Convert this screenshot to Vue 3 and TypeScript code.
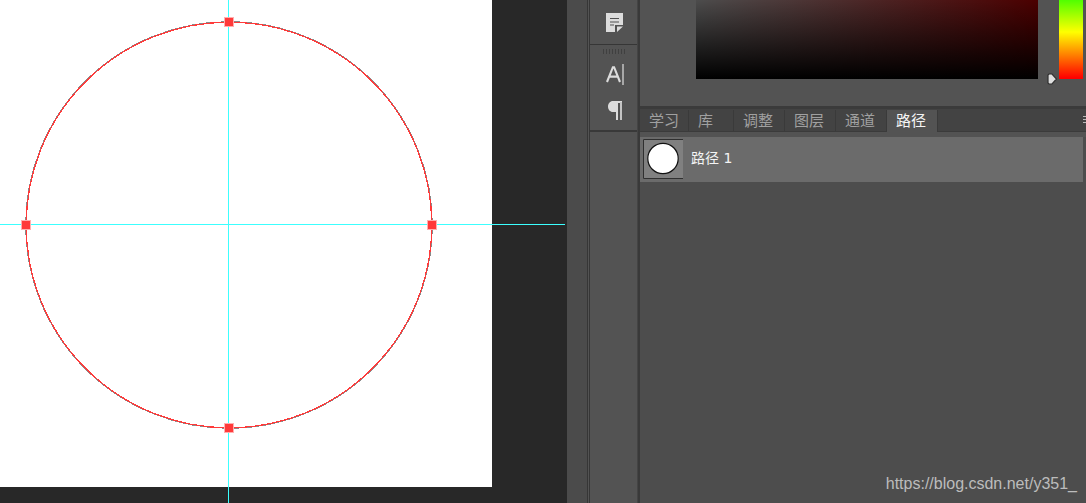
<script setup lang="ts">
import { ref } from 'vue'

interface Tab {
  id: string
  label: string
  size: string
}

const tabs: Tab[] = [
  { id: 'learn', label: '学习', size: 'medium' },
  { id: 'library', label: '库', size: 'short' },
  { id: 'adjust', label: '调整', size: 'normal' },
  { id: 'layers', label: '图层', size: 'normal' },
  { id: 'channels', label: '通道', size: 'normal' },
  { id: 'paths', label: '路径', size: 'normal' },
]

const active = ref('paths')

const anchors = [
  { x: 229, y: 22 },
  { x: 432, y: 225 },
  { x: 229, y: 428 },
  { x: 26, y: 225 },
]
</script>

<template>
  <div class="workspace">
    <main class="stage">
      <svg class="drawing" width="100%" height="100%" aria-label="画布">
        <rect width="492" height="487" fill="#fff" />
        <g shape-rendering="crispEdges" fill="#3cffff">
          <rect x="0" y="224" width="565" height="1" />
          <rect x="228" y="0" width="1" height="100%" />
        </g>
        <g fill="none" shape-rendering="crispEdges">
          <circle cx="229" cy="225" r="203.3" stroke="#8a8a8a" stroke-width="1.1" />
          <circle cx="229" cy="225" r="202.8" stroke="#ff3a3a" stroke-width="1.2" />
        </g>
        <g v-for="a in anchors" :key="`${a.x}-${a.y}`">
          <rect :x="a.x - 5" :y="a.y - 5" width="10" height="10" fill="#ffb0b0" />
          <rect :x="a.x - 4" :y="a.y - 4" width="8" height="8" fill="#ff3a3a" />
        </g>
      </svg>
    </main>
    <div class="gutter"></div>
    <aside class="dock">
      <div class="group notes">
        <button class="tool" aria-label="注释">
          <svg width="18" height="20" viewBox="0 0 18 20">
            <path d="M0 0H17V12H9V19H0Z" fill="#dcdcdc" />
            <path d="M11 13.5H17L11 19Z" fill="#dcdcdc" />
            <path d="M4 5.5H13M4 9H13M4 12H8" stroke="#505050" stroke-width="1.2" />
          </svg>
        </button>
      </div>
      <div class="group type">
        <div class="grip"></div>
        <button class="tool" aria-label="字符">
          <svg width="18" height="22" viewBox="0 0 18 22">
            <path d="M1 18L6.9 3.2H8.1L14 18M3.4 12.6H11.6" fill="none" stroke="#dcdcdc" stroke-width="2.1" />
            <path d="M17 0V21" stroke="#bdbdbd" stroke-width="1.6" />
          </svg>
        </button>
        <button class="tool" aria-label="段落">
          <svg width="14" height="20" viewBox="0 0 14 20">
            <path d="M5 0H14V2H10V19H8V11H5C2 11 0 8.5 0 5.5S2 0 5 0Z" fill="#dcdcdc" />
            <rect x="12" y="1" width="2" height="18" fill="#c4c4c4" />
          </svg>
        </button>
      </div>
    </aside>
    <section class="panels">
      <div class="color">
        <div class="field"></div>
        <div class="hue"><svg class="marker" width="11" height="12" viewBox="0 0 11 12">
          <path d="M2 1H5L9.5 6L5 11H2L1 10V2Z" fill="#dfdfdf" stroke="#303030" stroke-width="1.2" />
        </svg></div>
      </div>
      <nav class="tabs">
        <button
          v-for="t in tabs"
          :key="t.id"
          :class="['tab', t.size, { active: active === t.id }]"
          @click="active = t.id"
        >{{ t.label }}</button>
        <button class="menu" aria-label="面板菜单"></button>
      </nav>
      <div class="paths">
        <button class="row">
          <svg class="thumb" width="40" height="40" viewBox="0 0 40 40">
            <rect width="40" height="40" fill="#808080" />
            <path d="M40 .5H.5V39.5H40" fill="none" stroke="#303030" />
            <circle cx="20" cy="19.5" r="15.2" fill="#fff" stroke="#111" stroke-width="1.2" />
          </svg>
          <span>路径 1</span>
        </button>
      </div>
      <a class="source" href="https://blog.csdn.net/y351_">https://blog.csdn.net/y351_</a>
    </section>
  </div>
</template>

<style>
body {
  background: #282828;
}
</style>

<style scoped>
.workspace {
  display: flex;
  height: 100vh;
  overflow: hidden;
  background: #282828;
  font-family: "Liberation Sans", "Noto Sans CJK SC", sans-serif;
}
button {
  appearance: none;
  margin: 0;
  padding: 0;
  border: 0;
  border-radius: 0;
  background: none;
  font-family: inherit;
}
.stage {
  flex: 1;
  min-width: 0;
}
.drawing {
  display: block;
}
.gutter {
  width: 20px;
  background: #4b4b4b;
}
.dock {
  box-sizing: border-box;
  width: 51px;
  border-left: 3px double #363636;
  border-right: 1px solid #444;
  background: #535353;
}
.group {
  display: flex;
  flex-direction: column;
  align-items: center;
  box-sizing: border-box;
  padding-left: 2px;
  border-bottom: 1px solid #363636;
}
.notes {
  height: 45px;
  padding-top: 13px;
}
.type {
  height: 87px;
  padding-top: 4px;
  border-bottom: 2px solid #393939;
}
.tool {
  display: flex;
  justify-content: center;
  width: 30px;
}
.grip {
  width: 24px;
  height: 5px;
  margin-bottom: 10px;
  background: repeating-linear-gradient(90deg, #404040 0 1px, #535353 1px 3px);
}
.type .tool + .tool {
  margin-top: 15px;
}
.panels {
  display: flex;
  flex-direction: column;
  box-sizing: border-box;
  width: 448px;
  border-left: 2px solid #393939;
  background: #4d4d4d;
}
.color {
  display: flex;
  box-sizing: border-box;
  height: 107px;
  padding: 0 3px 27px 56px;
  border-bottom: 1px solid #3b3b3b;
  background: #535353;
}
.field {
  flex: 1;
  background:
    linear-gradient(180deg, rgb(0 0 0 / 0%), #000),
    linear-gradient(90deg, #4c4c4c, #4b0000);
}
.hue {
  position: relative;
  width: 24px;
  margin-left: 21px;
  background: linear-gradient(180deg, #50ff00 0, #ff0 32px, #f00 78px);
}
.marker {
  position: absolute;
  right: 25px;
  bottom: -6px;
}
.tabs {
  display: flex;
  box-sizing: border-box;
  height: 25px;
  padding-top: 1px;
  border-top: 2px solid #3b3b3b;
  border-bottom: 1px solid #3b3b3b;
  background: #434343;
}
.tab {
  box-sizing: border-box;
  width: 51px;
  padding-left: 9px;
  border-right: 1px solid #3a3a3a;
  color: #a0a0a0;
  font-size: 15px;
  line-height: 20px;
  text-align: left;
}
.tab.medium {
  width: 49px;
}
.tab.short {
  width: 45px;
}
.tab.active {
  height: 22px;
  background: #535353;
  color: #f4f4f4;
}
.menu {
  width: 3px;
  height: 9px;
  margin: 6px 0 0 auto;
  background: repeating-linear-gradient(180deg, #b8b8b8 0 1px, #434343 1px 3px);
}
.paths {
  padding: 5px 3px 0 0;
  background: linear-gradient(#535353 5px, #4d4d4d 5px);
}
.row {
  display: flex;
  align-items: flex-start;
  gap: 8px;
  box-sizing: border-box;
  width: 100%;
  height: 45px;
  padding: 2px 0 0 3px;
  background: #6b6b6b;
  color: #f4f4f4;
  font-family: "DejaVu Sans", "Noto Sans CJK SC", sans-serif;
  font-size: 14px;
  line-height: 38px;
}
.source {
  margin: auto 9px 9px auto;
  color: #bcbcbc;
  font-size: 16px;
  line-height: 20px;
  text-decoration: none;
}
</style>
